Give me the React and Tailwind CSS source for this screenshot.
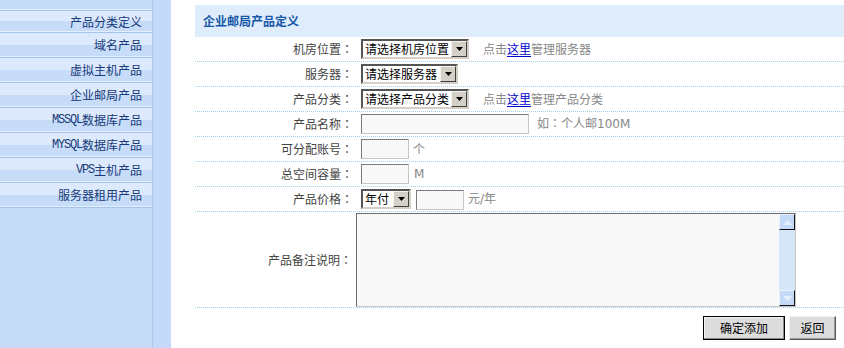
import React from 'react';

const menu = ['产品分类定义', '域名产品', '虚拟主机产品', '企业邮局产品', 'MSSQL数据库产品', 'MYSQL数据库产品', 'VPS主机产品', '服务器租用产品'];

function MenuText({ text }) {
  // latin letters were a half-width bitmap font in the original
  return text.split(/([A-Za-z]+)/).map((part, i) =>
    /[A-Za-z]/.test(part) ? (
      <span key={i} className="font-['Liberation_Mono',monospace] tracking-[-1.2px]">{part}</span>
    ) : (
      <span key={i}>{part}</span>
    )
  );
}

// centred full-width colon (SC puts it at the left of the cell)
function Colon() {
  return <span className="font-['Noto_Sans_CJK_TC',sans-serif]">：</span>;
}

function Select({ label, w }) {
  return (
    <div className={`flex h-[20px] items-center border-2 border-t-[#555] border-l-[#555] border-b-[#d4d0c8] border-r-[#d4d0c8] bg-white ${w}`}>
      <span className="flex-1 whitespace-nowrap pl-[2px] text-[12px] leading-[14px] text-black">{label}</span>
      <span className="flex h-[16px] w-[16px] items-center justify-center border border-t-[#f4f3ee] border-l-[#f4f3ee] border-b-[#404040] border-r-[#404040] bg-[#d4d0c8]">
        <svg width="7" height="4" viewBox="0 0 7 4">
          <path d="M0 0h7L3.5 4z" fill="#000" />
        </svg>
      </span>
    </div>
  );
}

function TextInput({ w }) {
  return (
    <input
      type="text"
      className={`h-[20px] border border-t-[#7b7b7b] border-l-[#7b7b7b] border-b-[#c6c6c6] border-r-[#c6c6c6] bg-[#f8f8f8] px-[2px] text-[12px] outline-none ${w}`}
    />
  );
}

function ScrollBtn({ up }) {
  return (
    <div className="flex h-[16px] w-[16px] items-center justify-center border border-t-[#e8f1fc] border-l-[#e8f1fc] border-b-[#111] border-r-[#111] bg-[#c4daf6]">
      <svg width="9" height="5" viewBox="0 0 9 5">
        <path d={up ? 'M0 5h9L4.5 0z' : 'M0 0h9L4.5 5z'} fill="#e6effc" />
      </svg>
    </div>
  );
}

function Row({ label, children }) {
  return (
    <div className="flex h-[25px] items-center border-b border-dotted border-[#a3cfe9] pb-[1px]">
      <div className="w-[166px] pr-[8px] text-right text-[12px] leading-[14px] text-[#444]">
        {label}
        <Colon />
      </div>
      <div className="flex items-center">{children}</div>
    </div>
  );
}

function Hint({ children, className = '' }) {
  return <span className={`text-[12px] leading-[14px] text-[#888] ${className}`}>{children}</span>;
}

export default function App() {
  return (
    <div className="flex h-[348px] w-[844px] overflow-hidden bg-white font-['Noto_Sans_CJK_SC',sans-serif]">
      {/* left menu */}
      <div className="flex w-[153px] shrink-0 flex-col border-r border-[#afc9ee] bg-[#c6dbf8]">
        <div className="h-[11px] border-b border-[#a6c3ec] shadow-[inset_0_-1px_0_#e4eefd]"></div>
        {menu.map((m, i) => (
          <div
            key={m}
            className={`flex items-center justify-end border-b border-[#a6c3ec] bg-linear-to-b from-[#dde9fc] from-50% to-[#c7dcf8] to-50% pr-[10px] text-[12px] leading-[14px] text-[#173a78] shadow-[inset_0_-1px_0_#e4eefd] ${i === 0 ? 'h-[22px]' : 'h-[25px]'}`}
          >
            <MenuText text={m} />
          </div>
        ))}
      </div>
      <div className="w-[18px] shrink-0 bg-[#c4daf8]"></div>

      {/* form */}
      <div className="flex-1 pl-[24px] pt-[5px]">
        <div className="flex h-[32px] items-center bg-[#dfecfb] pl-[8px] text-[12px] font-bold leading-[14px] text-[#1658a8]">
          企业邮局产品定义
        </div>

        <Row label="机房位置">
          <Select label="请选择机房位置" w="w-[108px]" />
          <Hint className="ml-[14px]">
            点击<span className="text-[#0000cc] underline underline-offset-2">这里</span>管理服务器
          </Hint>
        </Row>
        <Row label="服务器">
          <Select label="请选择服务器" w="w-[97px]" />
        </Row>
        <Row label="产品分类">
          <Select label="请选择产品分类" w="w-[108px]" />
          <Hint className="ml-[14px]">
            点击<span className="text-[#0000cc] underline underline-offset-2">这里</span>管理产品分类
          </Hint>
        </Row>
        <Row label="产品名称">
          <TextInput w="w-[168px]" />
          <Hint className="ml-[8px]">
            如<Colon />个人邮<span className="font-['DejaVu_Sans',sans-serif]">100M</span>
          </Hint>
        </Row>
        <Row label="可分配账号">
          <TextInput w="w-[48px]" />
          <Hint className="ml-[4px]">个</Hint>
        </Row>
        <Row label="总空间容量">
          <TextInput w="w-[48px]" />
          <Hint className="ml-[5px] font-['DejaVu_Sans',sans-serif]">M</Hint>
        </Row>
        <Row label="产品价格">
          <Select label="年付" w="w-[50px]" />
          <div className="ml-[5px]">
            <TextInput w="w-[48px]" />
          </div>
          <Hint className="ml-[4px]">
            元<span className="font-['DejaVu_Sans',sans-serif]">/</span>年
          </Hint>
        </Row>

        <div className="flex h-[96px] items-start border-b border-dotted border-[#a3cfe9]">
          <div className="flex h-[95px] w-[161px] shrink-0 items-center justify-end pr-[4px] text-[12px] leading-[14px] text-[#444]">
            产品备注说明<Colon />
          </div>
          <div className="mt-[1px] flex h-[94px] w-[440px] border border-t-[#6e6e6e] border-l-[#6e6e6e] border-b-[#c8c8c8] border-r-[#c8c8c8] bg-[#f8f8f8]">
            <textarea className="flex-1 resize-none overflow-hidden bg-transparent p-[2px] text-[12px] outline-none"></textarea>
            <div className="flex w-[16px] flex-col justify-between bg-[#d6e6f9]">
              <ScrollBtn up />
              <ScrollBtn />
            </div>
          </div>
        </div>

        <div className="flex justify-end gap-[4px] pr-[8px] pt-[8px]">
          <button className="h-[24px] w-[82px] border border-black bg-[#dcdcdc] text-[12px] leading-[14px] text-black shadow-[inset_-1px_-1px_0_#8a8a8a,inset_1px_1px_0_#f4f4f4]">
            确定添加
          </button>
          <button className="h-[24px] w-[47px] border border-t-[#f2f2f2] border-l-[#f2f2f2] border-b-[#5a5a5a] border-r-[#5a5a5a] bg-[#dcdcdc] text-[12px] leading-[14px] text-black shadow-[inset_-1px_-1px_0_#9a9a9a]">
            返回
          </button>
        </div>
      </div>
    </div>
  );
}
